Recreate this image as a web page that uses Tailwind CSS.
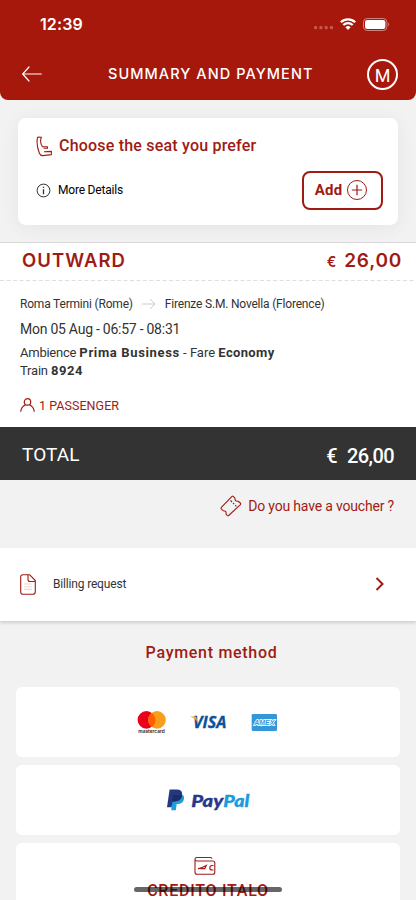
<!DOCTYPE html>
<html lang="en">
<head>
<meta charset="utf-8">
<meta name="viewport" content="width=device-width, initial-scale=1">
<title>Summary and payment</title>
<script src="https://cdn.jsdelivr.net/npm/@tailwindcss/browser@4"></script>
</head>
<body class="bg-[#f2f2f2]">
<div class="relative flex h-[900px] w-[416px] flex-col overflow-hidden bg-[#f2f2f2] font-['Roboto',sans-serif] text-[#333] whitespace-nowrap">

  <header class="h-[100px] shrink-0 rounded-b-[8px] bg-[#a6170c] text-white">
    <div class="flex h-12 items-center justify-between pr-[26px] pl-10">
      <span class="font-['Inter',sans-serif] text-[16px] font-semibold tracking-[0.1px]">12:39</span>
      <div class="flex items-center">
        <svg class="mt-2 mr-[6px]" width="20" height="4" viewBox="0 0 20 4" fill="#c4564e"><rect x="0" y="0" width="3.2" height="3.2" rx="1"/><rect x="5.3" y="0" width="3.2" height="3.2" rx="1"/><rect x="10.6" y="0" width="3.2" height="3.2" rx="1"/><rect x="15.9" y="0" width="3.2" height="3.2" rx="1"/></svg>
        <svg class="mr-[7px]" width="16" height="12" viewBox="0 0 16 12" fill="none" stroke="#fff" stroke-width="2.2"><path d="M.8 4.3a10.2 10.2 0 0 1 14.4 0"/><path d="M3.3 7.1a6.6 6.6 0 0 1 9.4 0"/><path d="M8 12 5.4 9.3a3.8 3.8 0 0 1 5.2 0z" fill="#fff" stroke="none"/></svg>
        <svg width="27" height="13" viewBox="0 0 27 13"><rect x=".5" y=".5" width="23.4" height="12" rx="3.6" fill="none" stroke="#d3827c"/><rect x="2" y="2" width="20.4" height="9" rx="2.2" fill="#fff"/><path d="M25.2 4.6c1.4.5 1.4 3.3 0 3.8z" fill="#d3827c"/></svg>
      </div>
    </div>
    <div class="flex h-[52px] items-center pr-[18px] pl-[22px]">
      <svg width="20" height="16" viewBox="0 0 20 16" fill="none" stroke="#fff" stroke-width="1.2" stroke-linecap="round" stroke-linejoin="round"><path d="M19.3 8H.7M7 1 .7 8 7 15"/></svg>
      <h1 class="ml-[66px] font-['Inter',sans-serif] text-[14.5px] font-medium tracking-[1.06px]">SUMMARY AND PAYMENT</h1>
      <div class="mt-px ml-auto flex size-[31px] items-center justify-center rounded-full border-2 border-white pt-px text-[18px] font-normal">M</div>
    </div>
  </header>

  <section class="mx-[18px] mt-[18px] h-[107px] shrink-0 rounded-[8px] bg-white shadow-[0_3px_20px_rgba(0,0,0,0.06)]">
    <div class="flex h-[56px] items-center pl-[18px]">
      <svg class="mr-[7px]" width="16" height="21" viewBox="0 0 16 21" fill="none" stroke="#a01b14" stroke-width="1.1" stroke-linejoin="round"><path d="M1.6 1 5.4 1.2C4.2 4 4.3 7.6 6.4 10.8H11.5V12.2H7.5M1.6 1C.6 5.5 1.1 11.5 3.4 17.3Q4.2 19.6 6.8 19.6L15.4 18.6V15.4L8 15.8"/></svg>
      <h2 class="text-[16px] font-medium tracking-[0.2px] text-[#a01b14]">Choose the seat you prefer</h2>
    </div>
    <div class="flex h-[32px] items-center pr-[15px] pl-[18px]">
      <svg class="mr-[7px]" width="15" height="15" viewBox="0 0 15 15" fill="none" stroke="#333"><circle cx="7.5" cy="7.5" r="6.4"/><path d="M7.5 6.3v5M7.5 3.8v1.3" stroke-width="1.3"/></svg>
      <span class="text-[12px] tracking-[-0.2px] text-black">More Details</span>
      <button class="ml-auto flex h-[39px] w-[81px] items-center justify-center gap-[4px] rounded-[8px] border-2 border-[#a01b14] pr-[2px] pb-px text-[15px] font-bold tracking-[0.2px] text-[#a01b14]"><span class="pt-px">Add</span>
        <svg width="22" height="22" viewBox="0 0 22 22" fill="none" stroke="#a01b14"><circle cx="11" cy="11" r="9.5"/><path d="M11 5.8v10.4M5.8 11h10.4" stroke-width="1.2"/></svg>
      </button>
    </div>
  </section>

  <section class="mt-[17px] h-[185px] shrink-0 border-t border-[#d8d8d8] bg-white">
    <div class="flex h-[37px] items-center justify-between pr-[14px] pb-[2px] pl-[22px] font-['Inter',sans-serif] font-semibold text-[#a01b14]">
      <h2 class="text-[18.5px] tracking-[1.05px]">OUTWARD</h2>
      <div class="flex items-baseline gap-[8px] pt-px"><span class="text-[14px]">€</span><span class="text-[19px] tracking-[0.75px]">26,00</span></div>
    </div>
    <svg class="block" width="416" height="1"><path d="M0 .5h416" stroke="#dedede" stroke-dasharray="4 2.5"/></svg>
    <div class="pl-5">
      <div class="mt-[14px] flex h-[18px] items-center text-[12px] tracking-[-0.19px]">
        <span>Roma Termini (Rome)</span>
        <svg class="mr-[9px] ml-[9px]" width="14" height="12" viewBox="0 0 14 12" fill="none" stroke="#ccc"><path d="M0 6h13M8 1l5 5-5 5"/></svg>
        <span>Firenze S.M. Novella (Florence)</span>
      </div>
      <div class="mt-[5px] flex h-[22px] items-center text-[14px] tracking-[-0.25px]">Mon 05 Aug - 06:57 - 08:31</div>
      <div class="mt-[4px] text-[13px] leading-[18px]"><span class="tracking-[-0.25px]">Ambience</span> <b class="tracking-[0.65px]">Prima Business</b> - Fare <b class="tracking-[0.35px]">Economy</b><br><span class="tracking-[-0.2px]">Train</span> <b class="tracking-[0.5px]">8924</b></div>
      <div class="mt-[16px] flex h-[20px] items-center text-[12.5px] tracking-[0.05px] text-[#a01b14]">
        <svg class="mr-[4px] mb-[2px]" width="15" height="14" viewBox="0 0 15 14" fill="none" stroke="#a01b14" stroke-width="1.2"><circle cx="7.5" cy="3.9" r="3.2"/><path d="M.7 13.8C1 9.8 3 8 5.6 6.8M14.3 13.8C14 9.8 12 8 9.4 6.8"/></svg>
        <span>1 PASSENGER</span>
      </div>
    </div>
  </section>

  <div class="flex h-[53px] shrink-0 items-center justify-between bg-[#333] pr-[22px] pl-[22px] text-white">
    <span class="mt-[3px] text-[19px] tracking-[0.1px]">TOTAL</span>
    <span class="mt-[5px] flex gap-[10px] text-[20px] font-medium tracking-[-0.6px]"><span>€</span><span>26,00</span></span>
  </div>

  <div class="flex h-[68px] shrink-0 items-start justify-end pt-[15px] pr-[22px] text-[#a01b14]">
    <svg class="mr-[6px]" width="22" height="22" viewBox="0 0 22 22" fill="none" stroke="#a01b14" stroke-width="1.1" stroke-linejoin="round"><path d="M13.2 1.3 15 3.1Q14.6 6.5 18.1 6.2L20.6 8.2Q21 9 20.2 9.8L8.7 20.5Q7.9 21 7.1 20.3L6 19Q6.8 15.8 3.4 15.8L1.2 13.8Q.8 13 1.6 12.1L12 1.3Q12.6.8 13.2 1.3Z"/><path d="m10.5 5.5 1.5 1.5m1 1 1.2 1.2m1 1 1.2 1.2"/></svg>
    <span class="text-[14px] leading-[22px] tracking-[-0.18px]">Do you have a voucher ?</span>
  </div>

  <div class="flex h-[73px] shrink-0 items-center bg-white pr-[31px] pl-5 shadow-[0_2px_3px_rgba(0,0,0,0.15)]">
    <svg class="mr-[17px]" width="16" height="21" viewBox="0 0 16 21" fill="none" stroke="#a01b14" stroke-width="1.1" stroke-linejoin="round"><path d="M3 .7H9.5L15.3 6.5V17.7Q15.3 20.3 12.7 20.3H3Q.7 20.3.7 17.7V3Q.7.7 3 .7ZM8 .7V5.5Q8 7.5 10 7.5H15.2"/><path d="M4 10h8M4 12.7h8M4 15.4h8" stroke="#f2d5d3"/></svg>
    <span class="mb-[2px] text-[12px] tracking-[-0.17px]">Billing request</span>
    <svg class="ml-auto mb-px" width="10" height="14" viewBox="0 0 10 14" fill="none" stroke="#a01b14" stroke-width="2"><path d="m1.5 1 6 6-6 6"/></svg>
  </div>

  <h2 class="flex h-[66px] shrink-0 items-center justify-center pb-[2px] pl-[7px] text-[16px] font-medium tracking-[0.7px] text-[#a01b14]">Payment method</h2>

  <div class="flex shrink-0 flex-col gap-2 px-4">
    <div class="flex h-[70px] items-center rounded-[6px] bg-white pl-[121px]">
      <svg class="mt-[2px]" width="30" height="24" viewBox="0 0 30 24"><circle cx="9.4" cy="8.9" r="8.8" fill="#eb001b"/><circle cx="20" cy="8.9" r="8.8" fill="#f79e1b"/><path d="M14.8 1.8a8.8 8.8 0 0 1 0 14.2 8.8 8.8 0 0 1 0-14.2Z" fill="#ff5f00"/><text x="1.3" y="22" font-family="Inter,sans-serif" font-size="4.8" font-weight="600" fill="#222" textLength="26.5" lengthAdjust="spacingAndGlyphs">mastercard</text></svg>
      <svg class="ml-[22px]" width="40" height="22" viewBox="0 -3 40 22"><text x="4" y="13.7" font-family="Open Sans,sans-serif" font-size="15.6" font-weight="700" font-style="italic" fill="#0d5199" stroke="#0d5199" stroke-width=".3" textLength="33.5" lengthAdjust="spacingAndGlyphs">VISA</text><path d="M1.5 2.4H5.6Q7.2 2.4 7.5 3.8L8.2 7.4Q6 3.8 1.5 2.7Z" fill="#f7a823"/></svg>
      <svg class="ml-[22px]" width="26" height="17" viewBox="0 0 26 17"><rect x=".7" width="25.3" height="17" rx="1.3" fill="#3498d8"/><text x="3.3" y="11.4" font-family="Liberation Sans,sans-serif" font-size="7.6" font-weight="700" font-style="italic" fill="#3498d8" stroke="#fff" stroke-width="1.7" paint-order="stroke" textLength="20" lengthAdjust="spacingAndGlyphs">AMEX</text></svg>
    </div>
    <div class="flex h-[70px] items-center rounded-[6px] bg-white pl-[150px]">
      <svg width="84" height="24" viewBox="0 0 84 24"><path d="M6.2 6H14Q19.2 6.5 17.8 11.7 16.4 16 11.5 16H10.7L9.8 22.3H5.3Z" fill="#1ba0dc"/><path d="M3.6 1.5H11.4Q17.4 2 16 8.2 14.6 13.4 8.6 13.4H6.6L5.5 19.2H1Z" fill="#25387f"/><path d="M7 7H14.8L16 8Q14.6 13.4 8.6 13.4H6Z" fill="#1d2c66"/><g font-family="Lato,sans-serif" font-size="17.8" font-weight="900" font-style="italic" stroke-width=".35"><text x="25.3" y="18.8" fill="#27388c" stroke="#27388c" textLength="32" lengthAdjust="spacingAndGlyphs">Pay</text><text x="57.3" y="18.8" fill="#1b9bdb" stroke="#1b9bdb" textLength="26" lengthAdjust="spacingAndGlyphs">Pal</text></g></svg>
    </div>
    <div class="flex h-[70px] flex-col items-center rounded-t-[6px] bg-white pt-[13px]">
      <svg class="mr-[6px]" width="22" height="20" viewBox="0 0 22 20" fill="none" stroke="#a01b14" stroke-width="1.1"><path d="M17.8 2.7Q17.8 1.5 16.6 1.5H2.8Q1 1.5 1 3.2 1 5 2.8 5H18.8Q20.8 5 20.8 7V16.2Q20.8 18.2 18.8 18.2H3Q1 18.2 1 16.2V3.2"/><path d="M19.5 9.5H18.2Q15.8 9.5 15.8 11.7 15.8 14 18.2 14H19.5"/><path d="M4 12.9Q8 11.8 12.3 9.5L10.8 12.6H6.5" stroke-width="1.1"/></svg>
      <span class="mt-[5px] text-[16px] font-medium leading-[20px] tracking-[0.75px] text-[#a01b14]">CREDITO ITALO</span>
    </div>
  </div>
  <div class="absolute top-[887px] left-[134px] h-[5px] w-[148px] rounded-full bg-black/60"></div>
</div>
</body>
</html>
